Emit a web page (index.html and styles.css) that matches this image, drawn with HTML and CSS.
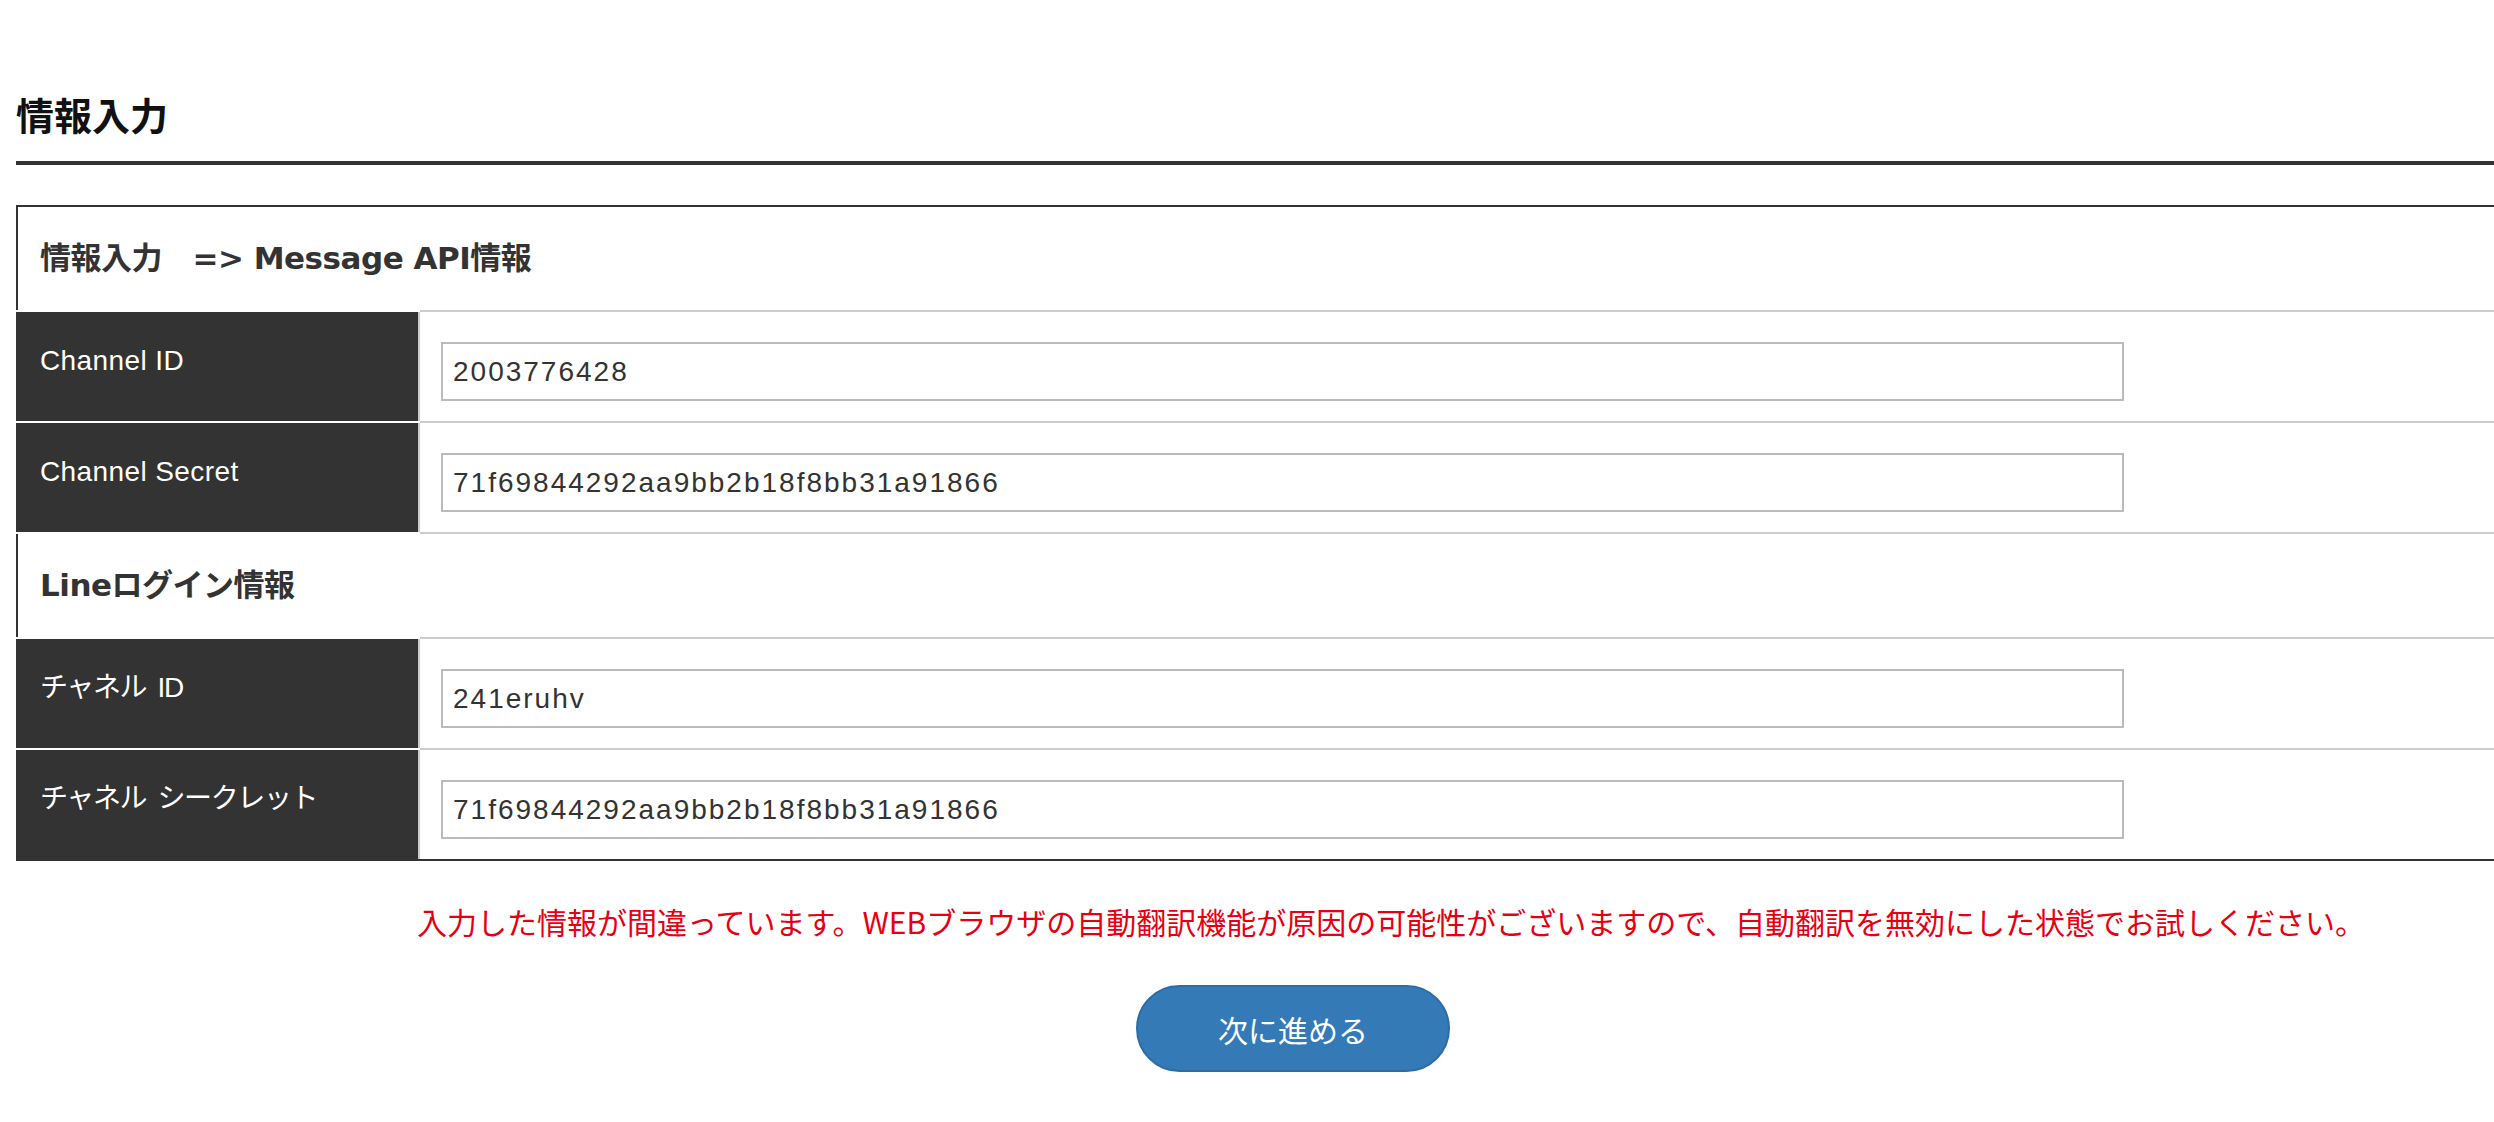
FILE: index.html
```html
<!DOCTYPE html>
<html lang="ja">
<head>
<meta charset="utf-8">
<title>情報入力</title>
<link rel="stylesheet" href="styles.css">
</head>
<body>
<div class="page">
  <h2 class="page-title">情報入力</h2>

  <table class="form-table">
    <tr class="section">
      <th colspan="2">情報入力　=&gt; Message API情報</th>
    </tr>
    <tr class="field">
      <th class="label">Channel ID</th>
      <td class="value"><input class="text-input" type="text" value="2003776428"></td>
    </tr>
    <tr class="field">
      <th class="label">Channel Secret</th>
      <td class="value"><input class="text-input" type="text" value="71f69844292aa9bb2b18f8bb31a91866"></td>
    </tr>
    <tr class="section">
      <th colspan="2">Lineログイン情報</th>
    </tr>
    <tr class="field">
      <th class="label label-ja">チャネル ID</th>
      <td class="value"><input class="text-input" type="text" value="241eruhv"></td>
    </tr>
    <tr class="field last">
      <th class="label label-ja">チャネル シークレット</th>
      <td class="value"><input class="text-input" type="text" value="71f69844292aa9bb2b18f8bb31a91866"></td>
    </tr>
  </table>

  <p class="error">入力した情報が間違っています。WEBブラウザの自動翻訳機能が原因の可能性がございますので、自動翻訳を無効にした状態でお試しください。</p>

  <div class="actions">
    <button class="btn-next" type="button">次に進める</button>
  </div>
</div>
</body>
</html>
```

FILE: styles.css
```css
html, body {
  margin: 0;
  padding: 0;
  background: #fff;
  overflow: hidden;
}

body {
  font-family: "Liberation Sans", "Noto Sans CJK JP", sans-serif;
  color: #333;
}

.page {
  width: 2554px;
  padding-left: 16px;
}

.page-title {
  margin: 87px 0 0;
  padding: 0 0 20px 0;
  font-family: "Noto Sans CJK JP", sans-serif;
  font-size: 38px;
  line-height: 54px;
  font-weight: bold;
  color: #111;
  border-bottom: 4px solid #333;
}

.form-table {
  width: 100%;
  margin-top: 40px;
  border-collapse: collapse;
  border-top: 2px solid #333;
  border-left: 2px solid #333;
  border-bottom: 2px solid #333;
}

.section th {
  text-align: left;
  font-family: "DejaVu Sans", "Noto Sans CJK JP", sans-serif;
  font-size: 31px;
  line-height: 45px;
  letter-spacing: -0.5px;
  font-weight: bold;
  color: #333;
  padding: 29px 22px;
  background: #fff;
}

.field th.label {
  width: 356px;
  padding: 28px 22px 32px;
  background: #333;
  color: #fff;
  text-align: left;
  vertical-align: top;
  font-weight: normal;
  font-size: 28px;
  line-height: 42px;
  letter-spacing: 0.4px;
  border-top: 2px solid #fff;
  border-bottom: 2px solid #fff;
}

.field th.label-ja {
  letter-spacing: -1.4px;
  word-spacing: 5px;
}

.field td.value {
  padding: 30px 21px 20px;
  vertical-align: top;
  border-top: 2px solid #ccc;
  border-bottom: 2px solid #ccc;
  border-left: 2px solid #ccc;
}

.field.last th.label,
.field.last td.value {
  border-bottom: 2px solid #333;
}

.text-input {
  display: block;
  box-sizing: border-box;
  width: 1683px;
  height: 59px;
  margin: 0;
  padding: 0 10px;
  border: 2px solid #bbb;
  border-radius: 0;
  background: #fff;
  font-family: "Liberation Sans", "Noto Sans CJK JP", sans-serif;
  font-size: 28px;
  letter-spacing: 2px;
  color: #333;
  outline: none;
}

.error {
  margin: 38px 0 0;
  padding-left: 401px;
  font-family: "Noto Sans CJK JP", sans-serif;
  font-size: 30px;
  line-height: 45px;
  color: #e60012;
}

.actions {
  display: flex;
  justify-content: center;
  margin-top: 41px;
}

.btn-next {
  width: 314px;
  height: 87px;
  border: 2px solid #2e6da4;
  border-radius: 44px;
  background: #337ab7;
  color: #fff;
  font-family: "Noto Sans CJK JP", sans-serif;
  font-size: 30px;
  line-height: 1;
  cursor: pointer;
}
```
